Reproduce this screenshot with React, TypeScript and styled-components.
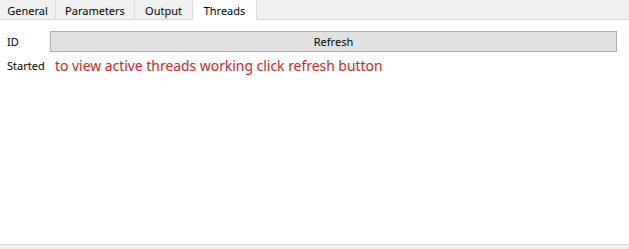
import { createGlobalStyle } from "styled-components";
import styled from "styled-components";

const GlobalStyle = createGlobalStyle`
  html, body {
    margin: 0;
    padding: 0;
    background: #ffffff;
  }
  body {
    font-family: "Noto Sans", "Open Sans", sans-serif;
    font-size: 11px;
    color: #000;
  }
`;

const Window = styled.div`
  width: 629px;
  height: 249px;
  display: flex;
  flex-direction: column;
  background: #fff;
  overflow: hidden;
`;

const TabBar = styled.div`
  display: flex;
  height: 19px;
  background: #f0f0f0;
  border-bottom: 1px solid #d9d9d9;
  flex: 0 0 auto;
`;

const Tab = styled.div<{ $active?: boolean; $width: number }>`
  display: flex;
  align-items: center;
  justify-content: center;
  width: ${(p) => p.$width}px;
  box-sizing: border-box;
  height: ${(p) => (p.$active ? "20px" : "19px")};
  padding-top: ${(p) => (p.$active ? "0" : "2px")};
  background: ${(p) => (p.$active ? "#ffffff" : "#f0f0f0")};
  border-right: 1px solid #d9d9d9;
  border-left: ${(p) => (p.$active ? "1px solid #d9d9d9" : "none")};
  margin-left: ${(p) => (p.$active ? "-1px" : "0")};
  font-size: 11px;
  color: #000;
`;

const Panel = styled.div`
  flex: 1;
  display: grid;
  grid-template-columns: 43px 1fr;
  grid-auto-rows: min-content;
  row-gap: 4px;
  padding: 11px 12px 0 7px;
  align-items: center;
`;

const Label = styled.span`
  font-size: 11px;
  color: #000;
`;

const Button = styled.button`
  height: 21px;
  width: 100%;
  box-sizing: border-box;
  background: #e1e1e1;
  border: 1px solid #adadad;
  font-family: inherit;
  font-size: 11px;
  color: #000;
  padding: 0;
`;

const Hint = styled.span`
  font-family: "Noto Sans", "Open Sans", sans-serif;
  font-size: 13.9px;
  color: #d2232a;
  padding-left: 5px;
`;

const Footer = styled.div`
  height: 4px;
  flex: 0 0 auto;
  background: #f0f0f0;
  border-top: 1px solid #d4d4d4;
`;

const tabs = [
  { label: "General", width: 56 },
  { label: "Parameters", width: 79 },
  { label: "Output", width: 58 },
  { label: "Threads", width: 65, active: true },
];

export default function App() {
  return (
    <Window>
      <GlobalStyle />
      <TabBar>
        {tabs.map((t) => (
          <Tab key={t.label} $active={t.active} $width={t.width}>
            {t.label}
          </Tab>
        ))}
      </TabBar>
      <Panel>
        <Label>ID</Label>
        <Button>Refresh</Button>
        <Label>Started</Label>
        <Hint>to view active threads working click refresh button</Hint>
      </Panel>
      <Footer />
    </Window>
  );
}
